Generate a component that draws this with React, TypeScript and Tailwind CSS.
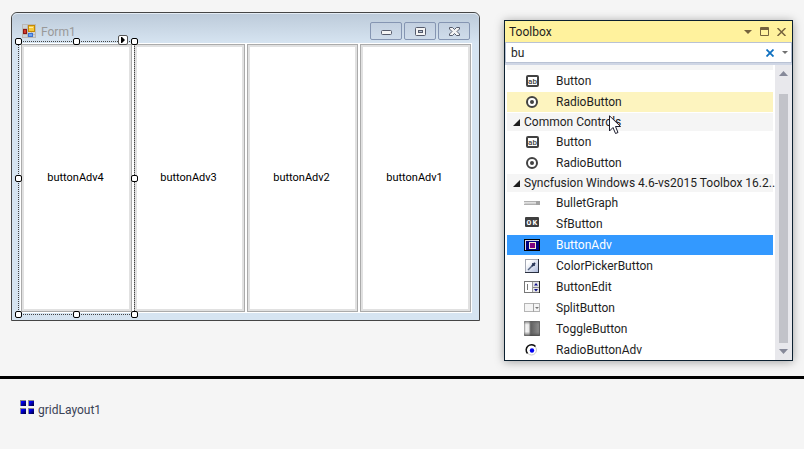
import React from "react";

const uiFont = "font-[Roboto,'Open_Sans',sans-serif]";

function Svg({ w, h, children, className = "" }: { w: number; h: number; children: React.ReactNode; className?: string }) {
  return (
    <svg width={w} height={h} viewBox={`0 0 ${w} ${h}`} className={`block shrink-0 ${className}`} aria-hidden="true">
      {children}
    </svg>
  );
}

function FormIcon() {
  return (
    <Svg w={14} h={14}>
      <rect x="0.5" y="0.5" width="13" height="13" fill="#cbd2da" stroke="#bcb9b6" />
      <path d="M5.5 0V14M0 4.5H6M0 10.5H14M9.5 8V14" stroke="#bcb9b6" />
      <rect x="6.5" y="1.5" width="6" height="6" fill="#f6c93c" stroke="#c48a06" />
      <path d="M7 3.5H11" stroke="#ffeaa0" />
      <rect x="1.5" y="5.5" width="3" height="4" fill="#d23a2a" stroke="#8c1712" />
      <rect x="6.5" y="9.5" width="4" height="3" fill="#6ea4f2" stroke="#3d70ce" />
    </Svg>
  );
}

function ButtonIcon() {
  return (
    <Svg w={16} h={16}>
      <rect x="3" y="3" width="11" height="10" rx="1" fill="#fff" stroke="#424242" strokeWidth="2" />
      <text x="8.5" y="11" textAnchor="middle" fontSize="8" fontWeight="500" fill="#424242" className="font-[Roboto,sans-serif]">
        ab
      </text>
    </Svg>
  );
}

function RadioIcon() {
  return (
    <Svg w={16} h={16}>
      <circle cx="8" cy="8" r="5" fill="#fff" stroke="#424242" strokeWidth="2" />
      <circle cx="8" cy="8" r="2" fill="#424242" />
    </Svg>
  );
}

function BulletIcon() {
  return (
    <Svg w={16} h={16}>
      <rect y="6" width="16" height="4" fill="#b0b0b0" />
      <rect x="12" y="6" width="4" height="4" fill="#a2a2a2" />
      <rect y="7" width="12" height="2" fill="#e0e0e0" />
      <rect x="1" y="8" width="11" height="1" fill="#cfcfcf" />
    </Svg>
  );
}

function OkIcon() {
  return (
    <Svg w={16} h={16}>
      <rect x="1" y="1" width="14" height="10" rx="1" fill="#3f3f3f" />
      <text x="5" y="9" textAnchor="middle" fontSize="8" fontWeight="700" fill="#fff" className="font-['Liberation_Mono',monospace]">
        O
      </text>
      <text x="11" y="9" textAnchor="middle" fontSize="8" fontWeight="700" fill="#fff" className="font-['Liberation_Mono',monospace]">
        K
      </text>
    </Svg>
  );
}

function ButtonAdvIcon() {
  return (
    <Svg w={16} h={16}>
      <rect x="0" y="2" width="16" height="12" fill="#000" />
      <rect x="1" y="3" width="14" height="10" fill="#d8d8e8" />
      <rect x="2" y="4" width="13" height="9" fill="#000080" />
      <rect x="5" y="5" width="7" height="7" fill="#f5ecd0" />
      <rect x="6" y="6" width="5" height="5" fill="#800080" />
    </Svg>
  );
}

function PickerIcon() {
  return (
    <Svg w={16} h={16}>
      <defs>
        <linearGradient id="picker" x1="0" y1="0" x2="1" y2="1">
          <stop offset="0.2" stopColor="#fff" />
          <stop offset="1" stopColor="#aebbdc" />
        </linearGradient>
      </defs>
      <rect x="1" y="1" width="14" height="14" fill="#2a3040" />
      <rect x="1" y="1" width="13" height="13" fill="#a5a9b5" />
      <rect x="2" y="2" width="12" height="12" fill="url(#picker)" />
      <path d="M4 12L9 7" stroke="#51617f" strokeWidth="1.5" />
      <path d="M8 8L11 5" stroke="#223052" strokeWidth="2" />
      <path d="M8 5L11 8" stroke="#223052" strokeWidth="0.8" />
    </Svg>
  );
}

function ButtonEditIcon() {
  return (
    <Svg w={16} h={16}>
      <rect x="0" y="2" width="16" height="12" fill="#777" />
      <rect x="1" y="3" width="7" height="10" fill="#fff" />
      <rect x="3" y="5" width="1" height="6" fill="#777" />
      <rect x="8" y="3" width="7" height="10" fill="#e4e4e4" />
      <rect x="8" y="3" width="1" height="10" fill="#999" />
      <rect x="15" y="2" width="1" height="12" fill="#222" />
      <rect x="9" y="8" width="6" height="1" fill="#888" />
      <path d="M10 6.5L12 4L14 6.5ZM10 10L14 10L12 12.5Z" fill="#10108a" />
    </Svg>
  );
}

function SplitIcon() {
  return (
    <Svg w={16} h={16}>
      <rect x="0.5" y="3.5" width="15" height="8" fill="#f4f4f4" stroke="#b5b5b5" />
      <path d="M9.5 3V12" stroke="#a5a5a5" />
      <path d="M11 7H15L13 9Z" fill="#777" />
    </Svg>
  );
}

function ToggleIcon() {
  return (
    <Svg w={16} h={16}>
      <defs>
        <linearGradient id="toggle">
          <stop offset="0" stopColor="#909090" />
          <stop offset="0.12" stopColor="#f5f5f5" />
          <stop offset="0.3" stopColor="#e8e8e8" />
          <stop offset="0.42" stopColor="#5e5e5e" />
          <stop offset="0.9" stopColor="#8a8a8a" />
          <stop offset="1" stopColor="#555" />
        </linearGradient>
        <linearGradient id="toggleShade" x1="0" y1="0" x2="0" y2="1">
          <stop offset="0" stopColor="#555" stopOpacity="0.8" />
          <stop offset="0.25" stopColor="#777" stopOpacity="0" />
          <stop offset="0.7" stopColor="#777" stopOpacity="0" />
          <stop offset="1" stopColor="#444" stopOpacity="0.9" />
        </linearGradient>
      </defs>
      <rect width="16" height="15" rx="1" fill="url(#toggle)" />
      <rect width="16" height="15" rx="1" fill="url(#toggleShade)" />
    </Svg>
  );
}

function RadioAdvIcon() {
  return (
    <Svg w={16} h={16}>
      <circle cx="7.5" cy="8" r="5" fill="#fff" stroke="#c8c8c8" />
      <path d="M3.5 11.5A5 5 0 0 1 11.5 4.5" fill="none" stroke="#111" strokeWidth="1.5" />
      <circle cx="8" cy="8.5" r="2.2" fill="#0000f0" />
    </Svg>
  );
}

function GridIcon() {
  const cells = [[0, 0], [8, 0], [0, 8], [8, 8]];
  return (
    <Svg w={14} h={14}>
      <defs>
        <linearGradient id="cell" x1="0" y1="0" x2="1" y2="1">
          <stop offset="0.2" stopColor="#0000ff" />
          <stop offset="0.9" stopColor="#000040" />
        </linearGradient>
      </defs>
      {cells.map(([x, y]) => (
        <g key={`${x}-${y}`}>
          <rect x={x} y={y} width="6" height="6" fill="#8a8a8a" />
          <rect x={x + 1} y={y + 1} width="5" height="5" fill="url(#cell)" />
        </g>
      ))}
    </Svg>
  );
}

function Item({ icon, label, state = "" }: { icon: React.ReactNode; label: string; state?: "" | "hover" | "selected" }) {
  const tone = state === "selected" ? "bg-[#3399ff] text-white" : state === "hover" ? "bg-[#fdf4bf] text-[#1e1e1e]" : "text-[#1e1e1e]";
  return (
    <li>
      <button type="button" className={`flex h-5 w-full items-center gap-4 pl-[17px] text-left ${tone}`}>
        {icon}
        <span>{label}</span>
      </button>
    </li>
  );
}

function Group({ label }: { label: string }) {
  return (
    <li>
      <button type="button" aria-expanded="true" className="flex h-[18px] w-full items-center gap-1 bg-[#f5f5f5] pl-1.5 text-left text-[#1e1e1e]">
        <Svg w={7} h={7}>
          <path d="M7 0V7H0Z" fill="#1e1e1e" />
        </Svg>
        <span className="whitespace-nowrap">{label}</span>
      </button>
    </li>
  );
}

function CaptionButton({ label, children }: { label: string; children: React.ReactNode }) {
  return (
    <button type="button" aria-label={label} className="flex h-[18px] w-8 items-center justify-center rounded-xs border border-[#8595b2] bg-linear-to-b from-[#c3d0e0] to-[#cfdcea]">
      {children}
    </button>
  );
}

const handles = [
  "left-0 top-0",
  "left-1/2 top-0",
  "left-full top-0",
  "left-0 top-1/2",
  "left-full top-1/2",
  "left-0 top-full",
  "left-1/2 top-full",
  "left-full top-full",
];

function Selection() {
  return (
    <div className="absolute -top-[3px] -right-0.5 -bottom-0.5 -left-[3px]">
      <svg className="absolute inset-0 size-full overflow-visible" aria-hidden="true">
        <rect x="0.5" y="0.5" width="100%" height="100%" fill="none" stroke="#444" strokeDasharray="1 1" shapeRendering="crispEdges" />
      </svg>
      {handles.map((place) => (
        <span key={place} className={`absolute -mt-[3px] -ml-[3px] size-[7px] rounded-xs border border-black bg-white ${place}`} />
      ))}
      <button type="button" aria-label="Tasks" className="absolute -top-1.5 right-1.5 flex size-2.5 items-center justify-center rounded-xs border border-[#555] bg-white">
        <Svg w={4} h={6}>
          <path d="M0 0H1L4 3L1 6H0Z" />
        </Svg>
      </button>
    </div>
  );
}

function FormWindow() {
  return (
    <section aria-label="Form1" className="min-w-0 flex-1 rounded-t-md border border-[#454545] bg-[#d6e4f1] pr-[7px] pb-[7px] pl-2">
      <header className="-mr-[7px] -ml-2 flex h-[30px] items-start rounded-t-md border-t border-[#e4ecf4] bg-linear-to-b from-[#bdcbda] to-[#d6e4f1] pt-2 pr-[9px] pl-2.5">
        <div className="flex flex-1 gap-[5px] pt-0.5">
          <FormIcon />
          <h1 className="text-xs leading-4 text-[#999]">Form1</h1>
        </div>
        <div className="flex gap-0.5">
          <CaptionButton label="Minimize">
            <Svg w={11} h={10}>
              <rect x="0.5" y="4.5" width="10" height="4" rx="1" fill="#f4f4f4" stroke="#555b6b" />
            </Svg>
          </CaptionButton>
          <CaptionButton label="Maximize">
            <Svg w={11} h={9}>
              <rect x="0.5" y="0.5" width="10" height="8" rx="1" fill="#f4f4f4" stroke="#555b6b" />
              <rect x="3.5" y="3.5" width="4" height="2" fill="#b8c4d4" stroke="#555b6b" />
            </Svg>
          </CaptionButton>
          <CaptionButton label="Close">
            <Svg w={11} h={9}>
              <path d="M0.5 0.5H3.5L5.5 2.5L7.5 0.5H10.5V2L8 4.5L10.5 7V8.5H7.5L5.5 6.5L3.5 8.5H0.5V7L3 4.5L0.5 2Z" fill="#f4f4f4" stroke="#555b6b" />
            </Svg>
          </CaptionButton>
        </div>
      </header>
      <div className="grid h-[270px] grid-cols-4 gap-0.5 bg-white p-px text-[11px]">
        {[4, 3, 2, 1].map((n) => (
          <div key={n} className={n === 4 ? "relative z-10" : ""}>
            <button type="button" className="size-full border border-[#ababab] bg-white pr-0.5 text-black inset-ring-2 inset-ring-[#e1e1e1]">
              buttonAdv{n}
            </button>
            {n === 4 && <Selection />}
          </div>
        ))}
      </div>
    </section>
  );
}

function Toolbox() {
  return (
    <section aria-label="Toolbox" className="relative mt-2 w-[289px] shrink-0 border border-[#0b2030] bg-white text-xs shadow-[0_1px_9px_rgba(0,0,0,0.35)]">
      <header className="flex h-[21px] items-center bg-[#fff29d] pr-1.5 pl-1">
        <h2 className="flex-1 text-[#1e1e1e]">Toolbox</h2>
        <div className="flex items-center gap-2">
          <button type="button" aria-label="Window position">
            <Svg w={8} h={4}>
              <path d="M0 0H8L4 4Z" fill="#75633d" />
            </Svg>
          </button>
          <button type="button" aria-label="Maximize">
            <Svg w={9} h={9}>
              <path d="M0.5 0.5H8.5V8.5H0.5ZM0 1.5H9M0 2.5H9" fill="none" stroke="#75633d" />
            </Svg>
          </button>
          <button type="button" aria-label="Close">
            <Svg w={9} h={8}>
              <path d="M0.5 0L8.5 8M8.5 0L0.5 8" stroke="#75633d" strokeWidth="1.5" />
            </Svg>
          </button>
        </div>
      </header>
      <div className="bg-[#cfd6e5] pb-0.5">
        <div className="flex h-[21px] items-center border border-[#b9c2d4] bg-white pr-[3px] pl-[5px]">
          <input type="text" aria-label="Search Toolbox" defaultValue="bu" className="h-4 min-w-0 flex-1 text-[#1e1e1e] outline-none" />
          <button type="button" aria-label="Clear search" className="mr-2">
            <Svg w={8} h={8}>
              <path d="M0.5 0.5L7.5 7.5M7.5 0.5L0.5 7.5" stroke="#0e70c0" strokeWidth="1.8" />
            </Svg>
          </button>
          <button type="button" aria-label="Search options">
            <Svg w={6} h={3}>
              <path d="M0 0H6L3 3Z" fill="#717171" />
            </Svg>
          </button>
        </div>
      </div>
      <div className="flex">
        <ul className="flex min-w-0 flex-1 flex-col gap-px px-0.5">
          <li className="h-[5px] bg-[#f5f5f5]" />
          <Item icon={<ButtonIcon />} label="Button" />
          <Item icon={<RadioIcon />} label="RadioButton" state="hover" />
          <Group label="Common Controls" />
          <Item icon={<ButtonIcon />} label="Button" />
          <Item icon={<RadioIcon />} label="RadioButton" />
          <Group label="Syncfusion Windows 4.6-vs2015 Toolbox 16.2..." />
          <Item icon={<BulletIcon />} label="BulletGraph" />
          <Item icon={<OkIcon />} label="SfButton" />
          <Item icon={<ButtonAdvIcon />} label="ButtonAdv" state="selected" />
          <Item icon={<PickerIcon />} label="ColorPickerButton" />
          <Item icon={<ButtonEditIcon />} label="ButtonEdit" />
          <Item icon={<SplitIcon />} label="SplitButton" />
          <Item icon={<ToggleIcon />} label="ToggleButton" />
          <Item icon={<RadioAdvIcon />} label="RadioButtonAdv" />
        </ul>
        <div className="flex w-[17px] shrink-0 flex-col items-center gap-1.5 bg-[#e8e8ec] py-1.5">
          <button type="button" aria-label="Scroll up" className="pb-3">
            <Svg w={9} h={5}>
              <path d="M0 5L4.5 0L9 5Z" fill="#868999" />
            </Svg>
          </button>
          <div className="w-[9px] flex-1 bg-[#c2c3c9]" />
          <button type="button" aria-label="Scroll down">
            <Svg w={9} h={5}>
              <path d="M0 0L4.5 5L9 0Z" fill="#868999" />
            </Svg>
          </button>
        </div>
      </div>
      <svg width="13" height="20" viewBox="0 0 13 20" className="pointer-events-none absolute top-[94px] left-[104px]" aria-hidden="true">
        <path d="M0.5 0.8V16L4 12.5L6.5 18.5L9 17.5L6.5 11.5H11.5Z" fill="#fff" stroke="#1c1c2c" />
      </svg>
    </section>
  );
}

export default function App() {
  return (
    <main className={`flex min-h-screen flex-col bg-[#f5f5f5] ${uiFont}`}>
      <div className="flex items-start gap-6 border-b-3 border-black px-[11px] pt-3 pb-[15px]">
        <FormWindow />
        <Toolbox />
      </div>
      <div className="flex items-start gap-1 px-5 pt-[21px]">
        <GridIcon />
        <span className="text-xs leading-5 text-[#3b4256]">gridLayout1</span>
      </div>
    </main>
  );
}
